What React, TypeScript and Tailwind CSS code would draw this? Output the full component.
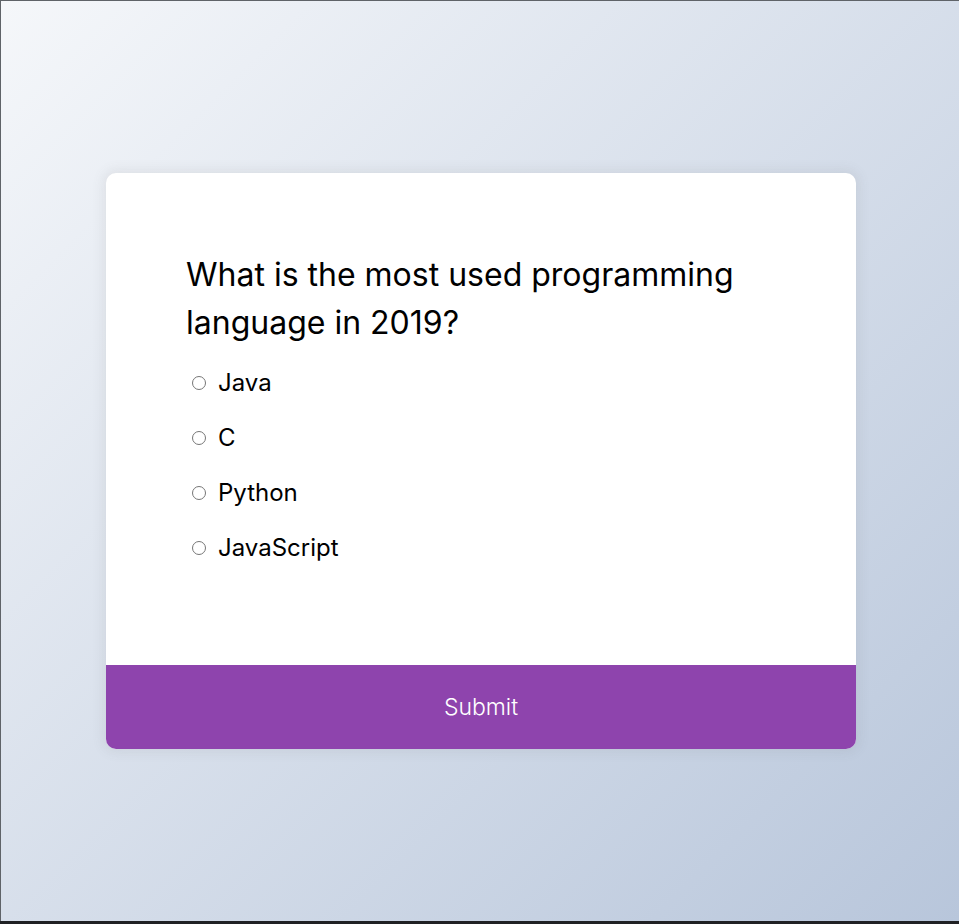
import { useState } from 'react';

const OPTIONS = ['Java', 'C', 'Python', 'JavaScript'];

export default function App() {
  const [picked, setPicked] = useState<string | null>(null);

  return (
    <div className="h-[924px] w-full flex flex-col bg-[#202124]">
      <div
        className="flex-1 flex items-center justify-center border-l border-t border-[#5f6368] bg-[linear-gradient(135deg,#f5f7fa,#b8c6db)]"
        style={{ fontFamily: 'Inter, "Open Sans", sans-serif' }}
      >
        <div className="w-[750px] ml-[2px] rounded-[10px] bg-white overflow-hidden shadow-[0_0_12px_3px_rgba(100,100,100,0.1)]">
          {/* Question */}
          <div className="px-20 pt-20 pb-20">
            <h2 className="text-[32px] leading-[48px] font-normal text-black -mt-[2px]">
              What is the most used programming language in 2019?
            </h2>
            <ul className="flex flex-col gap-5 mt-[18px] mb-5">
              {OPTIONS.map((opt) => (
                <li key={opt} className="flex items-center text-[24px] leading-[35px] text-black">
                  <input
                    type="radio"
                    name="answer"
                    id={opt}
                    checked={picked === opt}
                    onChange={() => setPicked(opt)}
                    className="appearance-none w-[14px] h-[14px] ml-[6px] mr-[12px] rounded-full border border-[#767676] bg-white"
                  />
                  <label htmlFor={opt}>{opt}</label>
                </li>
              ))}
            </ul>
          </div>

          <button className="block w-full bg-[#8e44ad] text-white text-[23px] leading-[32px] font-light py-[26px]">
            Submit
          </button>
        </div>
      </div>
      <div className="h-[3px]" />
    </div>
  );
}
